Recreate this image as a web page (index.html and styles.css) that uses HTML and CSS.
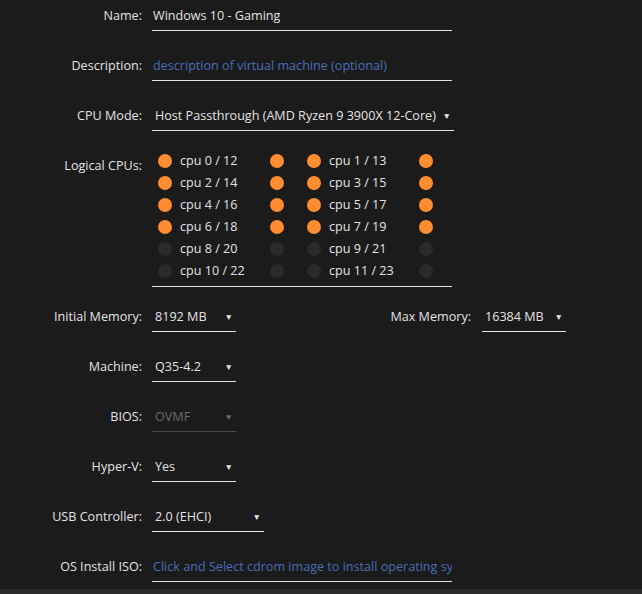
FILE: index.html
```html
<!DOCTYPE html>
<html lang="en">
<head>
  <meta charset="UTF-8">
  <meta name="viewport" content="width=device-width, initial-scale=1.0">
  <title>Edit VM</title>
  <link rel="stylesheet" href="styles.css">
</head>
<body>
  <div class="vm-form">
    <div class="row">
      <label class="label">Name:</label>
      <div class="field w-300"><span class="value">Windows 10 - Gaming</span></div>
    </div>
    <div class="row">
      <label class="label">Description:</label>
      <div class="field w-300"><span class="value placeholder">description of virtual machine (optional)</span></div>
    </div>
    <div class="row">
      <label class="label">CPU Mode:</label>
      <div class="field select w-302"><span class="value">Host Passthrough (AMD Ryzen 9 3900X 12-Core)</span><span class="arrow">&#9660;</span></div>
    </div>
    <div class="row cpus-row">
      <label class="label">Logical CPUs:</label>
      <div class="cpu-grid" id="cpuGrid"></div>
    </div>
    <div class="row">
      <label class="label">Initial Memory:</label>
      <div class="field select w-84"><span class="value">8192 MB</span><span class="arrow">&#9660;</span></div>
      <label class="label max-label">Max Memory:</label>
      <div class="field select w-84"><span class="value">16384 MB</span><span class="arrow">&#9660;</span></div>
    </div>
    <div class="row">
      <label class="label">Machine:</label>
      <div class="field select w-84"><span class="value">Q35-4.2</span><span class="arrow">&#9660;</span></div>
    </div>
    <div class="row">
      <label class="label">BIOS:</label>
      <div class="field select w-84 disabled"><span class="value">OVMF</span><span class="arrow">&#9660;</span></div>
    </div>
    <div class="row">
      <label class="label">Hyper-V:</label>
      <div class="field select w-84"><span class="value">Yes</span><span class="arrow">&#9660;</span></div>
    </div>
    <div class="row">
      <label class="label">USB Controller:</label>
      <div class="field select w-112"><span class="value">2.0 (EHCI)</span><span class="arrow">&#9660;</span></div>
    </div>
    <div class="row">
      <label class="label">OS Install ISO:</label>
      <div class="field w-300"><span class="value placeholder">Click and Select cdrom image to install operating system</span></div>
    </div>
  </div>
  <div class="footer-bar"></div>

  <script>
    const cpuGrid = document.getElementById('cpuGrid');
    // 8 of 12 cores pinned (thread + sibling)
    for (let i = 0; i < 12; i++) {
      const on = i < 8;
      const cell = document.createElement('div');
      cell.classList.add('cpu');
      cell.innerHTML = `
        <span class="dot ${on ? 'on' : ''}"></span>
        <span class="cpu-name">cpu ${i} / ${i + 12}</span>
        <span class="dot ${on ? 'on' : ''}"></span>
      `;
      cpuGrid.appendChild(cell);
    }
  </script>
</body>
</html>
```

FILE: styles.css
```css
body {
  font-family: "Open Sans", "Noto Sans", sans-serif;
  font-size: 12.6px;
  background-color: #1c1b1b;
  color: #e4e2e4;
  margin: 0;
  padding: 0;
  height: 594px;
  overflow: hidden;
}
.vm-form {
  height: 589px;
}
.row {
  display: flex;
  align-items: flex-start;
  margin-bottom: 19px;
  line-height: 20px;
}
.label {
  width: 142px;
  flex: none;
  text-align: right;
  padding: 6px 10px 4px 0;
}
.max-label {
  width: 235px;
  padding-right: 11px;
}
.field {
  display: flex;
  align-items: center;
  padding: 6px 0 4px;
  border-bottom: 1px solid #e4e2e4;
  overflow: hidden;
  white-space: nowrap;
}
.field .value {
  padding-left: 1px;
  overflow: hidden;
}
.select .value {
  padding-left: 3px;
  flex: 1;
}
.arrow {
  font-size: 8.5px;
  padding-right: 3px;
}
.placeholder {
  color: #486dba;
}
.disabled {
  color: #6b6b6b;
  border-bottom-color: #4a4a4a;
}
.w-300 { width: 300px; }
.w-302 { width: 302px; }
.w-84 { width: 84px; }
.w-112 { width: 112px; }
.cpus-row {
  margin-bottom: 14px;
}
.cpu-grid {
  width: 294px;
  padding: 0 0 4px 6px;
  border-bottom: 1px solid #e4e2e4;
  display: grid;
  grid-template-columns: 126px 126px;
  column-gap: 23px;
}
.cpu {
  display: flex;
  align-items: center;
  height: 22px;
}
.cpu-name {
  width: 90px;
  margin-left: 8px;
}
.dot {
  width: 14px;
  height: 14px;
  border-radius: 50%;
  background-color: #2b2b2b;
  flex: none;
}
.dot.on {
  background-color: #ff8c2f;
}
.footer-bar {
  height: 5px;
  background-color: #2b2a2a;
}
```
